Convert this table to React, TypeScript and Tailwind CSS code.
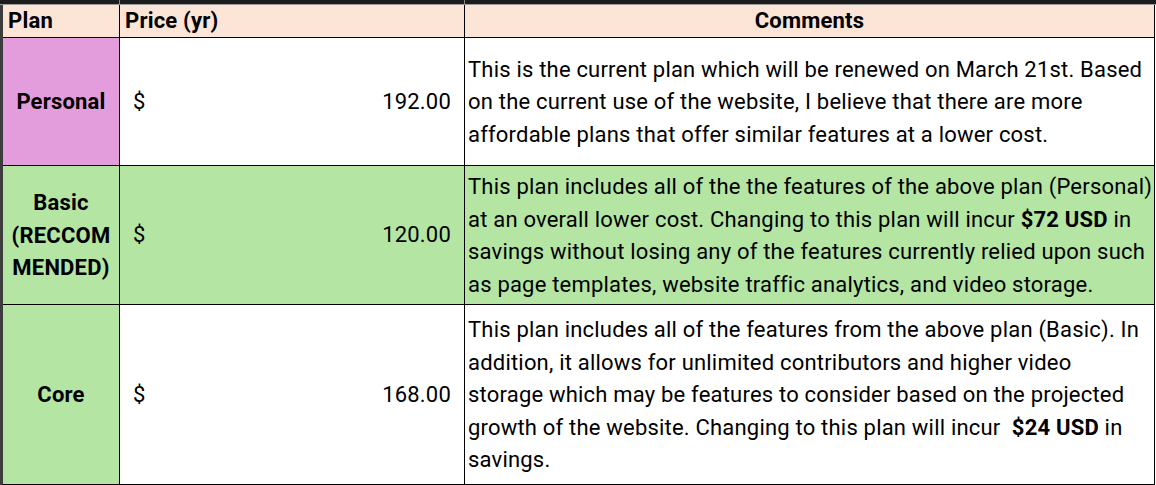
import React from 'react';

const rows = [
  {
    plan: ['Personal'],
    planBg: 'bg-[#e49ddc]',
    rowBg: 'bg-white',
    price: '192.00',
    height: 'h-[128px]',
    comment: [
      'This is the current plan which will be renewed on March 21st. Based',
      'on the current use of the website, I believe that there are more',
      'affordable plans that offer similar features at a lower cost.',
    ],
  },
  {
    plan: ['Basic', '(RECCOM', 'MENDED)'],
    planBg: 'bg-[#b4e5a2]',
    rowBg: 'bg-[#b4e5a2]',
    price: '120.00',
    height: 'h-[139px]',
    comment: [
      'This plan includes all of the the features of the above plan (Personal)',
      <>at an overall lower cost. Changing to this plan will incur <b>$72 USD</b> in</>,
      'savings without losing any of the features currently relied upon such',
      'as page templates, website traffic analytics, and video storage.',
    ],
  },
  {
    plan: ['Core'],
    planBg: 'bg-[#b4e5a2]',
    rowBg: 'bg-white',
    price: '168.00',
    height: 'h-[180px]',
    comment: [
      'This plan includes all of the features from the above plan (Basic). In',
      'addition, it allows for unlimited contributors and higher video',
      'storage which may be features to consider based on the projected',
      <>growth of the website. Changing to this plan will incur&nbsp; <b>$24 USD</b> in</>,
      'savings.',
    ],
  },
];

export default function App() {
  return (
    <div className="w-[1156px] h-[485px] bg-white text-black font-['Roboto',sans-serif] text-[22px] tracking-[0.2px] leading-[32px] overflow-hidden">
      {/* sheet top edge */}
      <div className="flex h-[5px] bg-[#1c1c1c] border-b border-[#9a9a9a]">
        <div className="w-[3px]" />
        <div className="w-[117px] border-r border-[#8a8a8a]" />
        <div className="w-[345px] border-r border-[#8a8a8a]" />
        <div className="flex-1" />
      </div>

      <div className="flex">
        {/* left window edge */}
        <div className="w-[3px] bg-[#3c3c3c]" />

        <div className="w-[1152px] border-r border-black">
          {/* header */}
          <div className="flex h-[33px] bg-[#fce4d6] border-b border-black font-bold">
            <div className="w-[117px] border-r border-black pl-[5px] flex items-center">Plan</div>
            <div className="w-[345px] border-r border-black pl-[5px] flex items-center">Price (yr)</div>
            <div className="flex-1 flex items-center justify-center">Comments</div>
          </div>

          {rows.map((r) => (
            <div key={r.price} className={`flex ${r.height} ${r.rowBg} border-b border-black`}>
              <div className={`w-[117px] border-r border-black ${r.planBg} flex flex-col items-center justify-center font-bold text-center leading-[32.5px] pt-[2px]`}>
                {r.plan.map((p) => (
                  <span key={p}>{p}</span>
                ))}
              </div>
              <div className="w-[345px] border-r border-black flex items-center justify-between px-[13px]">
                <span>$</span>
                <span>{r.price}</span>
              </div>
              <div className="flex-1 flex flex-col justify-center pl-[3px] pt-[2px] whitespace-nowrap leading-[32.5px]">
                {r.comment.map((line, i) => (
                  <span key={i}>{line}</span>
                ))}
              </div>
            </div>
          ))}
        </div>
      </div>
    </div>
  );
}
